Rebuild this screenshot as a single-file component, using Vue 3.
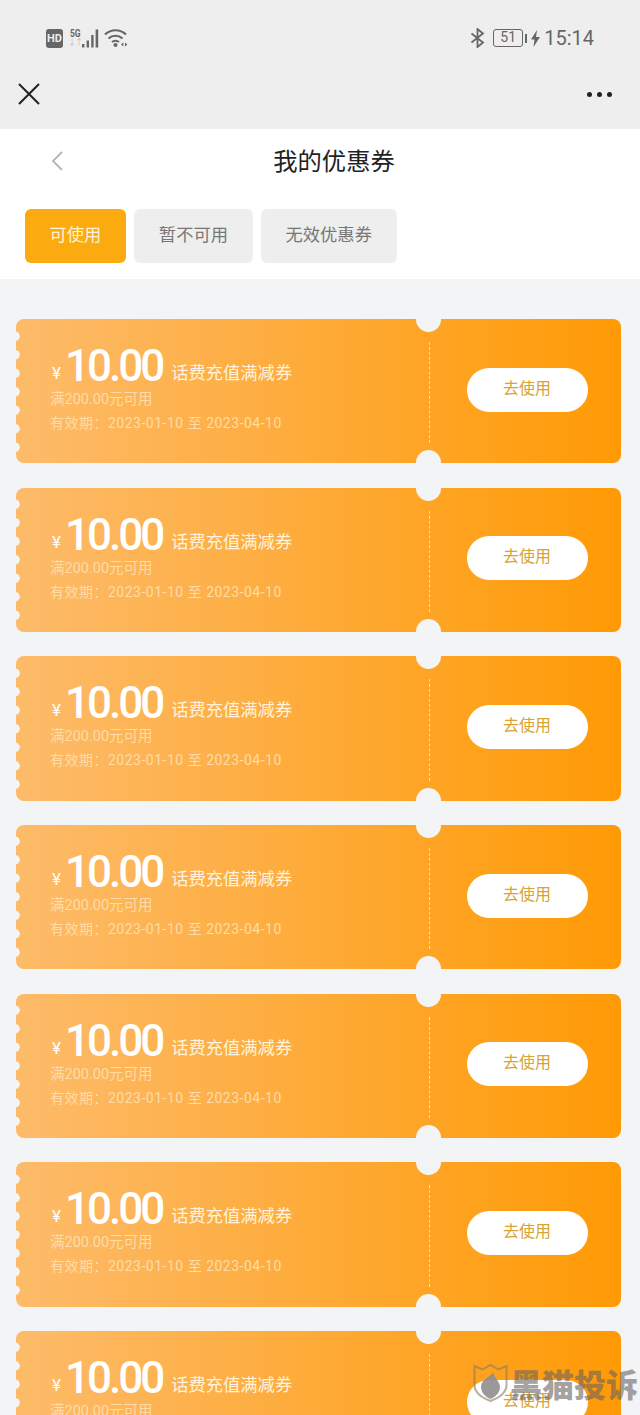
<template>
  <div class="page">
    <div class="top-gray">
      <div class="status-bar">
        <div class="status-left">
          <span class="hd">HD</span>
          <span class="net">
            <span class="net-5g">5G</span>
            <span class="net-arrows">↓↑</span>
          </span>
          <svg class="signal" width="17" height="19" viewBox="0 0 17 19">
            <rect x="0" y="15" width="2.4" height="3.5" fill="#666" />
            <rect x="4.6" y="11.5" width="2.4" height="7" fill="#666" />
            <rect x="9.2" y="6" width="2.4" height="12.5" fill="#666" />
            <rect x="13.6" y="0.5" width="2.6" height="18" fill="#666" />
          </svg>
          <svg class="wifi" width="24" height="20" viewBox="0 0 24 20">
            <path d="M1 6.5C7 .8 16 .8 22 6.5" fill="none" stroke="#666" stroke-width="2.2" />
            <path d="M4.5 10.500C8.500 6.800 14.500 6.800 18.500 10.500" fill="none" stroke="#666" stroke-width="2.2" />
            <path d="M8 14C10 12.300 13 12.300 15 14" fill="none" stroke="#666" stroke-width="2.2" />
            <circle cx="11.5" cy="17" r="2" fill="#666" />
            <path d="M17 16.500l2.400-2v4zM21 14.500l2.400 2-2.400 2z" fill="#666" />
          </svg>
        </div>
        <div class="status-right">
          <svg class="bt" width="15" height="20" viewBox="0 0 15 20">
            <path d="M1.500 5.500L13 14.500 7.500 19V1L13 5.500 1.500 14.500" fill="none" stroke="#666" stroke-width="1.800" />
          </svg>
          <span class="battery">51</span>
          <span class="battery-tip"></span>
          <svg class="bolt" width="9" height="17" viewBox="0 0 9 17">
            <path d="M6 0L0 9.500h3.500L2.500 17 9 7H5z" fill="#666" />
          </svg>
          <span class="time">15:14</span>
        </div>
      </div>
      <div class="nav-bar">
        <svg width="22" height="22" viewBox="0 0 22 22">
          <path d="M1 1L21 21M21 1L1 21" stroke="#222" stroke-width="2" fill="none" />
        </svg>
        <div class="dots"><i></i><i></i><i></i></div>
      </div>
    </div>

    <div class="header">
      <div class="title-row">
        <svg class="back" width="12" height="20" viewBox="0 0 12 20">
          <path d="M11 1L2 10l9 9" fill="none" stroke="#b5b5b5" stroke-width="1.800" />
        </svg>
        <h1 class="title">我的优惠券</h1>
      </div>
      <div class="tabs">
        <div
          v-for="(tab, i) in tabs"
          :key="tab"
          class="tab"
          :class="{ active: i === 0 }"
        >{{ tab }}</div>
      </div>
    </div>

    <div class="list">
      <div v-for="n in 7" :key="n" class="coupon">
        <div class="scallops"></div>
        <div class="coupon-left">
          <div class="price-row">
            <span class="yen">¥</span>
            <span class="amount">10.00</span>
            <span class="name">话费充值满减券</span>
          </div>
          <div class="sub">满200.00元可用</div>
          <div class="sub date">有效期：2023-01-10 至 2023-04-10</div>
        </div>
        <div class="coupon-right">
          <button class="use-btn">去使用</button>
        </div>
        <span class="notch notch-top"></span>
        <span class="notch notch-bottom"></span>
      </div>
    </div>

    <div class="watermark">
      <svg width="35" height="40" viewBox="0 0 35 40">
        <path d="M1.500 3l8 3.500 8-4.500 8 4.500 8-3.500v19c0 8-8 13-16 16-8-3-16-8-16-16z" fill="none" stroke="#8a7a66" stroke-width="2" opacity="0.6" />
        <path d="M20 9c-2 5-12 7-12 15 0 6 5 10 9.500 12C22 34 27 30 27 24c0-6-6-9-7-15z" fill="#8e8e8e" opacity="0.9" />
      </svg>
      <span>黑猫投诉</span>
    </div>
  </div>
</template>

<script setup>
const tabs = ['可使用', '暂不可用', '无效优惠券']
</script>

<style>
html, body {
  margin: 0;
  overflow: hidden;
}
</style>

<style scoped>
.page {
  position: relative;
  width: 640px;
  height: 1415px;
  overflow: hidden;
  background: #f3f4f6;
  font-family: "Roboto", "Noto Sans CJK SC", sans-serif;
}
.top-gray {
  height: 129px;
  background: #eeeeee;
  padding: 0 28px 0 18px;
  box-sizing: border-box;
}
.status-bar {
  height: 76px;
  display: flex;
  justify-content: space-between;
  align-items: center;
  color: #666;
}
.status-left {
  display: flex;
  align-items: center;
  margin-left: 28px;
}
.hd {
  width: 17px;
  height: 19px;
  border-radius: 3px;
  background: #666;
  color: #eee;
  font-size: 11px;
  font-weight: 700;
  line-height: 19px;
  text-align: center;
  margin-right: 7px;
}
.net {
  display: flex;
  flex-direction: column;
  align-items: center;
  width: 10px;
  margin-right: 2px;
  line-height: 1;
}
.net-5g {
  font-size: 10px;
  font-weight: 700;
  color: #666;
  transform: scaleX(0.85);
}
.net-arrows {
  font-size: 8px;
  color: #bbb;
  letter-spacing: -1px;
}
.wifi {
  margin-left: 5px;
}
.status-right {
  display: flex;
  align-items: center;
  margin-right: 18px;
}
.bt {
  margin-right: 8px;
}
.battery {
  width: 30px;
  height: 18px;
  box-sizing: border-box;
  border: 1.500px solid #666;
  border-radius: 3px;
  font-size: 14px;
  line-height: 15px;
  text-align: center;
}
.battery-tip {
  width: 2px;
  height: 9px;
  background: #666;
  margin: 0 4px 0 2px;
}
.bolt {
  margin-right: 4px;
}
.time {
  font-size: 20px;
}
.nav-bar {
  height: 36px;
  display: flex;
  justify-content: space-between;
  align-items: center;
}
.dots {
  display: flex;
  gap: 5px;
}
.dots i {
  width: 5px;
  height: 5px;
  border-radius: 50%;
  background: #222;
}
.header {
  height: 150px;
  background: #fff;
  padding: 0 25px;
  box-sizing: border-box;
}
.title-row {
  position: relative;
  height: 80px;
  display: flex;
  align-items: center;
  justify-content: center;
}
.back {
  position: absolute;
  left: 26px;
  top: 22px;
}
.title {
  margin: 0 0 14px 28px;
  font-size: 24.300px;
  font-weight: 400;
  color: #222;
  line-height: 34px;
}
.tabs {
  display: flex;
  gap: 7.500px;
}
.tab {
  height: 54px;
  padding: 0 25px;
  border-radius: 6px;
  background: #eeeeee;
  color: #777;
  font-size: 17.300px;
  line-height: 52px;
}
.tab.active {
  padding: 0 24.500px;
  margin-right: 0.500px;
  background: #fbab10;
  color: #fff3d6;
}
.list {
  padding: 40px 19px 0 16px;
}
.coupon {
  position: relative;
  height: 144.400px;
  margin-bottom: 24.270px;
  display: flex;
  border-radius: 8px;
  background: linear-gradient(90deg, #fdbb6a 0%, #ff9a05 100%);
}
.scallops {
  position: absolute;
  left: -1px;
  top: 7.500px;
  width: 6px;
  height: 129.500px;
  background: radial-gradient(circle at 0 50%, #f3f4f6 4.500px, transparent 5px) 0 0 / 6px 18.500px repeat-y;
}
.coupon-left {
  width: 412px;
  padding: 21px 0 0 35px;
  box-sizing: border-box;
  color: #fff;
}
.price-row {
  display: flex;
  align-items: baseline;
  height: 50px;
}
.yen {
  font-size: 17px;
  margin: 0 4px 0 1px;
  position: relative;
  top: -2px;
}
.amount {
  font-size: 44px;
  font-weight: 500;
  line-height: 52px;
  letter-spacing: -3px;
  margin-right: 9px;
}
.name {
  font-size: 17.300px;
  color: #fff3df;
  position: relative;
  top: -2px;
}
.sub {
  font-size: 14.500px;
  line-height: 22px;
  color: #ffdca8;
  margin-left: -1px;
  margin-top: -1px;
}
.date {
  margin-top: 1px;
  font-size: 14px;
  letter-spacing: 0.500px;
}
.coupon-right {
  flex: 1;
  position: relative;
  display: flex;
  align-items: center;
  justify-content: center;
  margin-left: 1px;
  padding-bottom: 3px;
  box-sizing: border-box;
}
.coupon-right::before {
  content: "";
  position: absolute;
  left: 0;
  top: 23px;
  bottom: 20px;
  border-left: 1px dashed #ffd9a0;
}
.use-btn {
  width: 121px;
  height: 44px;
  margin-left: 4px;
  border: none;
  border-radius: 22px;
  background: #fff;
  color: #d9a234;
  font-family: inherit;
  font-size: 16px;
  padding: 0 0 6px;
}
.notch {
  position: absolute;
  left: 400px;
  width: 25px;
  height: 25px;
  border-radius: 50%;
  background: #f3f4f6;
}
.notch-top {
  top: -12px;
}
.notch-bottom {
  bottom: -12px;
}
.watermark {
  position: absolute;
  left: 473px;
  top: 1360px;
  display: flex;
  align-items: center;
  gap: 2px;
  color: rgba(105, 100, 95, 0.62);
  font-size: 32px;
  font-weight: 900;
  white-space: nowrap;
}
</style>
